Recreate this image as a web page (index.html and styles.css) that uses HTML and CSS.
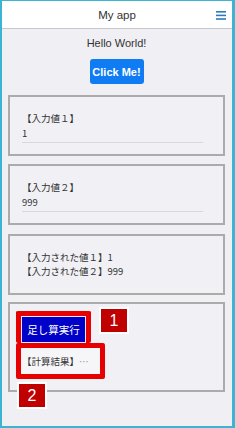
FILE: index.html
```html
<!DOCTYPE html>
<html>
<head>
  <meta charset="utf-8">
  <link rel="stylesheet" href="styles.css">
</head>
<body>
  <div class="screen">
    <div class="toolbar">
      <span class="toolbar-title">My app</span>
      <span class="menu-icon">
        <svg width="10" height="9" viewBox="0 0 10 9">
          <rect x="0" y="0" width="10" height="1.6" fill="#2b7bb9"/>
          <rect x="0" y="3.6" width="10" height="1.6" fill="#2b7bb9"/>
          <rect x="0" y="7.2" width="10" height="1.6" fill="#2b7bb9"/>
        </svg>
      </span>
    </div>

    <div class="content">
      <p class="hello">Hello World!</p>
      <div class="center">
        <button class="click-btn">Click Me!</button>
      </div>

      <div class="card">
        <div class="label">【入力値１】</div>
        <div class="input-line">1</div>
      </div>

      <div class="card">
        <div class="label">【入力値２】</div>
        <div class="input-line">999</div>
      </div>

      <div class="card card-text">
        <div>【入力された値１】1</div>
        <div>【入力された値２】999</div>
      </div>

      <div class="card card-calc">
        <div class="mark-row">
          <div class="red-box red-btn">
            <button class="add-btn">足し算実行</button>
          </div>
          <span class="num-badge badge-1">1</span>
        </div>
        <div class="red-box red-result">
          <div class="result">【計算結果】<span class="dots">…</span></div>
        </div>
        <span class="num-badge badge-2">2</span>
      </div>
    </div>
  </div>
</body>
</html>
```

FILE: styles.css
```css
* {
  box-sizing: border-box;
}

body {
  margin: 0;
  font-family: "Liberation Sans", "Noto Sans CJK JP", sans-serif;
  background: #fff;
}

.screen {
  width: 235px;
  height: 428px;
  border: 2px solid #3cb4d4;
  border-top-width: 1px;
  border-right-width: 3px;
  background: #efeff4;
  display: flex;
  flex-direction: column;
}

.toolbar {
  height: 28px;
  background: #fff;
  border-bottom: 1px solid #c8c8cc;
  display: flex;
  align-items: center;
  justify-content: center;
  position: relative;
}

.toolbar-title {
  font-size: 11.5px;
  color: #333;
}

.menu-icon {
  position: absolute;
  right: 6px;
  top: 10px;
  line-height: 0;
}

.content {
  padding: 0 7px 0 6px;
}

.hello {
  margin: 7px 0 0;
  text-align: center;
  font-size: 11px;
  line-height: 14px;
  color: #333;
}

.center {
  text-align: center;
  margin-top: 9px;
}

.click-btn {
  width: 54px;
  height: 25px;
  border: none;
  border-radius: 3px;
  background: #0f7cf4;
  color: #fff;
  font-family: inherit;
  font-size: 11px;
  font-weight: bold;
  padding: 0;
}

.card {
  border: 2px solid #ababab;
  background: #f0f0f5;
  margin-top: 8px;
  padding: 14px 12px 11px;
  font-family: "Noto Sans CJK JP", sans-serif;
  font-size: 9.5px;
  line-height: 14px;
  color: #333;
}

.content .center + .card {
  margin-top: 11px;
}

.input-line {
  width: 181px;
  padding-bottom: 2px;
  border-bottom: 1px solid #d8d8dc;
  margin-top: 1px;
}

.card-text {
  padding: 14px 12px 15px;
  margin-top: 9px;
}

.card-calc {
  margin-top: 7px;
  padding: 7px 6px 14px;
  height: 90px;
  position: relative;
}

.mark-row {
  display: flex;
  align-items: flex-start;
}

.red-box {
  border: 5px solid #e60000;
  border-radius: 2px;
}

.red-btn {
  padding: 0;
  border-bottom: none;
}

.add-btn {
  display: block;
  width: 65px;
  height: 27px;
  border: 1px solid #e8e8f5;
  background: #0000c8;
  color: #fff;
  font-family: "Noto Sans CJK JP", sans-serif;
  font-size: 10.5px;
  padding: 0;
}

.red-result {
  width: 89px;
}

.result {
  height: 26px;
  background: #f6f6f9;
  padding-left: 1px;
  line-height: 26px;
  font-size: 9.5px;
}

.dots {
  color: #999;
}

.num-badge {
  position: absolute;
  width: 30px;
  height: 27px;
  background: #c00000;
  border: 2px solid #fff;
  color: #fff;
  font-family: "Liberation Sans", sans-serif;
  font-size: 16px;
  line-height: 23px;
  text-align: center;
}

.badge-1 {
  left: 89px;
  top: 3px;
}

.badge-2 {
  left: 7px;
  top: 78px;
}
```
